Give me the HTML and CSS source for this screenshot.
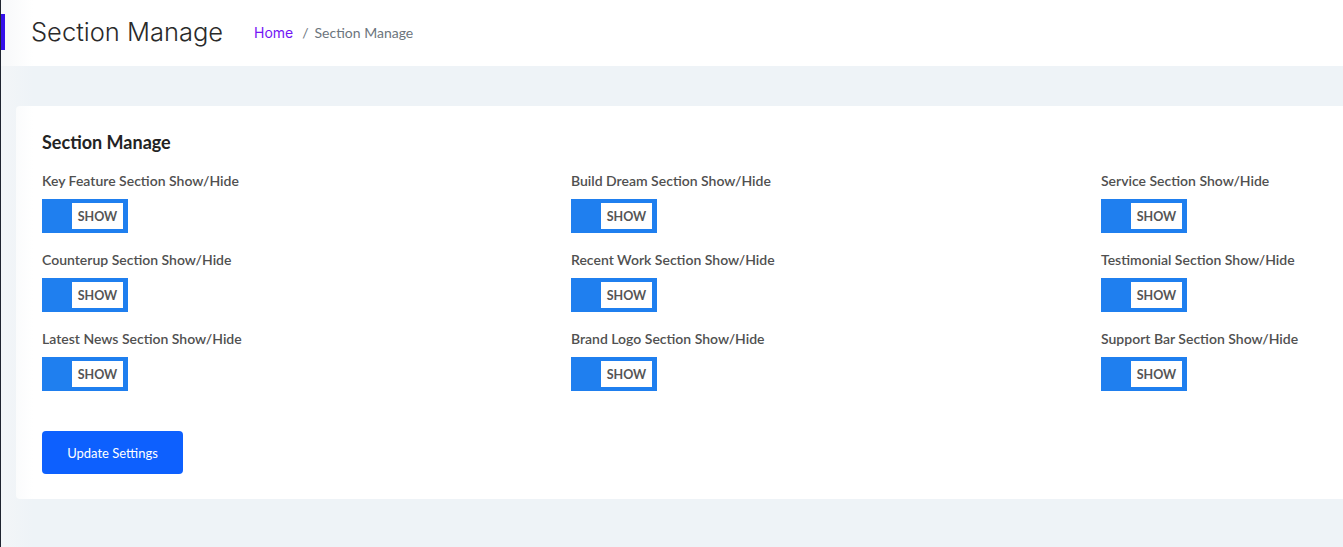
FILE: index.html
```html
<!DOCTYPE html>
<html lang="en">
<head>
<meta charset="utf-8">
<title>Section Manage</title>
<link rel="stylesheet" href="styles.css">
</head>
<body>
<div class="layout">
  <div class="edge"></div>
  <div class="main">
    <span class="edge-marker"></span>
    <span class="edge-glow"></span>
    <header class="page-header">
      <h1 class="page-title">Section Manage</h1>
      <nav class="breadcrumb">
        <a class="crumb-home" href="#">Home</a>
        <span class="crumb-sep">/</span>
        <span class="crumb-current">Section Manage</span>
      </nav>
    </header>
    <section class="content">
      <div class="card">
        <h2 class="card-title">Section Manage</h2>
        <div class="grid">
          <div class="item"><label class="label">Key Feature Section Show/Hide</label><div class="toggle"><span class="knob">SHOW</span></div></div>
          <div class="item"><label class="label">Build Dream Section Show/Hide</label><div class="toggle"><span class="knob">SHOW</span></div></div>
          <div class="item"><label class="label">Service Section Show/Hide</label><div class="toggle"><span class="knob">SHOW</span></div></div>
          <div class="item"><label class="label">Counterup Section Show/Hide</label><div class="toggle"><span class="knob">SHOW</span></div></div>
          <div class="item"><label class="label">Recent Work Section Show/Hide</label><div class="toggle"><span class="knob">SHOW</span></div></div>
          <div class="item"><label class="label">Testimonial Section Show/Hide</label><div class="toggle"><span class="knob">SHOW</span></div></div>
          <div class="item"><label class="label">Latest News Section Show/Hide</label><div class="toggle"><span class="knob">SHOW</span></div></div>
          <div class="item"><label class="label">Brand Logo Section Show/Hide</label><div class="toggle"><span class="knob">SHOW</span></div></div>
          <div class="item"><label class="label">Support Bar Section Show/Hide</label><div class="toggle"><span class="knob">SHOW</span></div></div>
        </div>
        <button class="btn-update" type="button">Update Settings</button>
      </div>
    </section>
  </div>
</div>
</body>
</html>
```
FILE: styles.css
```css
html, body {
  margin: 0;
  padding: 0;
  overflow: hidden;
}
body {
  background: #eef3f7;
  font-family: Lato, "Liberation Sans", sans-serif;
  width: 1343px;
  height: 547px;
}
.layout {
  display: flex;
  height: 547px;
}
.edge {
  width: 1px;
  flex: none;
  background: #1f2430;
}
.main {
  flex: 1;
  position: relative;
  min-width: 0;
  overflow: hidden;
}
.edge-marker {
  position: absolute;
  left: 0;
  top: 14px;
  width: 4px;
  height: 36px;
  background: #3510ea;
  z-index: 3;
}
.edge-glow {
  position: absolute;
  left: 0;
  top: 0;
  bottom: 0;
  width: 32px;
  background: linear-gradient(to right, rgba(244,246,248,0.75), rgba(244,246,248,0));
  z-index: 2;
  pointer-events: none;
}
.page-header {
  height: 66px;
  box-sizing: border-box;
  background: #ffffff;
  display: flex;
  align-items: center;
  padding: 0 0 3px 30px;
}
.page-title {
  margin: 0;
  font-family: Inter, "Open Sans", sans-serif;
  font-weight: 300;
  font-size: 25.5px;
  color: #2a2a2a;
  letter-spacing: 0;
  width: 223px;
}
.breadcrumb {
  display: flex;
  align-items: center;
  font-size: 14px;
  padding-top: 1px;
}
.crumb-home {
  font-family: Inter, "Open Sans", sans-serif;
  color: #7316f5;
  text-decoration: none;
  font-size: 14px;
}
.crumb-sep {
  color: #6c757d;
  margin: 0 6px 0 9px;
}
.crumb-current {
  color: #6c757d;
}
.content {
  padding: 40px 0 0 15px;
}
.card {
  background: #ffffff;
  border-radius: 4px;
  width: 1640px;
  box-sizing: border-box;
  padding: 24px 26px 25px;
}
.card-title {
  margin: 0 0 17px;
  font-size: 18px;
  line-height: 24px;
  font-weight: 700;
  color: #232323;
}
.grid {
  display: grid;
  grid-template-columns: 529px 530px 529px;
  row-gap: 17px;
}
.item {
  display: flex;
  flex-direction: column;
  align-items: flex-start;
}
.label {
  font-size: 14px;
  line-height: 20px;
  color: #505050;
  font-weight: 600;
  margin-bottom: 8px;
}
.toggle {
  width: 86px;
  height: 34px;
  box-sizing: border-box;
  background: #1f7fef;
  display: flex;
  justify-content: flex-end;
  align-items: center;
  padding-right: 5px;
}
.knob {
  width: 51px;
  height: 26px;
  background: #ffffff;
  display: flex;
  align-items: center;
  justify-content: center;
  font-size: 12.5px;
  font-weight: 700;
  color: #555555;
}
.btn-update {
  margin-top: 40px;
  width: 141px;
  height: 43px;
  border: none;
  border-radius: 4px;
  background: #0d60fe;
  color: #ffffff;
  font-family: Lato, "Liberation Sans", sans-serif;
  font-size: 13px;
  display: block;
  padding: 0;
}
```
